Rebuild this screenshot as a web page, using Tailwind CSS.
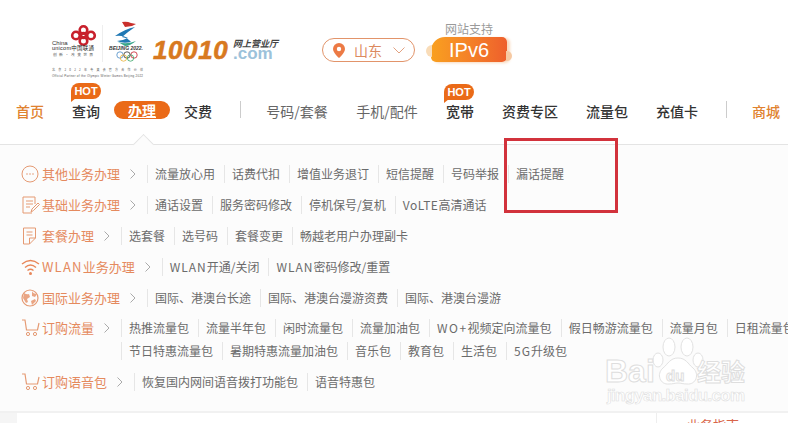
<!DOCTYPE html>
<html lang="zh-CN">
<head>
    <meta charset="UTF-8">
    <title>中国联通网上营业厅</title>
    <script src="https://cdn.jsdelivr.net/npm/@tailwindcss/browser@4"></script>
</head>
<body class="relative w-[788px] h-[423px] overflow-hidden bg-white font-['Noto_Sans_CJK_SC','Noto_Sans',sans-serif] text-[12px] whitespace-nowrap text-[#6b6b6b]">

    <!-- 顶部 logo 区 -->
    <header class="flex h-[84px]">
        <svg class="ml-[46px] mt-[20px] shrink-0" width="104" height="60" viewBox="46 20 104 60">
            <!-- 联通中国结 -->
            <g fill="none" stroke="#c8202c" stroke-width="2.600">
                <circle cx="83.500" cy="30" r="3.800"/>
                <circle cx="76" cy="35.500" r="3.800"/>
                <circle cx="91" cy="35.500" r="3.800"/>
                <circle cx="83.500" cy="41" r="3.800"/>
                <circle cx="83.500" cy="35.500" r="2.400"/>
            </g>
            <text x="52" y="45" font-size="6" fill="#333" font-family="Liberation Sans">China</text>
            <text x="52" y="50" font-size="5.500" fill="#222" font-family="Liberation Sans,Noto Sans CJK SC" textLength="42">unicom中国联通</text>
            <text x="53" y="56" font-size="3.800" fill="#555" textLength="40">创新·改变世界</text>
            <line x1="102.500" y1="25" x2="102.500" y2="62" stroke="#eee"/>
            <!-- 冬奥会徽 -->
            <path d="M122 22q5-1 9 1l5 1-4 2-7 1z" fill="#c9302c"/>
            <path d="M135 27q-10 2-20 9 8-1 13 2-6 3-11 3 6 3 14 1-3-4-9-5 7-6 13-10z" fill="#1f78b4"/>
            <path d="M118 42q8 3 18-1-6 5-11 5z" fill="#3aa68a"/>
            <text x="109" y="50" font-size="5" font-style="italic" font-weight="700" fill="#333" font-family="Liberation Sans" textLength="34">BEIJING 2022.</text>
            <g fill="none" stroke-width=".8">
                <circle cx="120" cy="55" r="3.200" stroke="#4a8cc7"/>
                <circle cx="127" cy="55" r="3.200" stroke="#333"/>
                <circle cx="134" cy="55" r="3.200" stroke="#c8202c"/>
                <circle cx="123.500" cy="58" r="3.200" stroke="#e8b23a"/>
                <circle cx="130.500" cy="58" r="3.200" stroke="#3aa66a"/>
            </g>
            <text x="52" y="71" font-size="3" fill="#555" textLength="91">北京2022年冬奥会官方合作伙伴</text>
            <text x="52" y="77" font-size="3" fill="#555" textLength="91" font-family="Liberation Sans">Official Partner of the Olympic Winter Games Beijing 2022</text>
        </svg>

        <!-- 10010 字样 -->
        <div class="ml-[3px] mt-[35px] w-[79px] shrink-0 font-['Liberation_Sans'] text-[26px] leading-[30px] font-bold italic text-[#d8791f] tracking-[0.6px] [-webkit-text-stroke:0.6px_#d8791f]">10010</div>
        <div class="ml-[1px] mt-[38px] flex w-[45px] shrink-0 flex-col">
            <span class="h-[12px] text-[9px] leading-[12px] font-bold italic text-[#444]">网上营业厅</span>
            <span class="font-['Liberation_Sans'] text-[17px] leading-[8px] font-bold text-[#9cc2da]">.com</span>
        </div>

        <!-- 省份选择 -->
        <div class="ml-[44px] mt-[38px] flex h-[24px] w-[93px] shrink-0 items-center rounded-full border border-[#e2946a] text-[14px] text-[#dc8a60]">
            <svg class="ml-[10px]" width="12" height="15" viewBox="0 0 12 15"><path d="M6 0a6 6 0 0 1 6 6c0 4-6 9-6 9s-6-5-6-9a6 6 0 0 1 6-6z" fill="#ec7a45"/><circle cx="6" cy="6" r="2.200" fill="#fff"/></svg>
            <span class="ml-[9px] leading-[20px]">山东</span>
            <svg class="ml-[11px]" width="12" height="7" viewBox="0 0 12 7"><path d="M.5 .5 6 6l5.500-5.500" fill="none" stroke="#e2a180"/></svg>
        </div>

        <!-- IPv6 -->
        <div class="ml-[16px] mt-[21px] flex w-[76px] shrink-0 flex-col items-center">
            <span class="text-[12px] leading-[15px] text-[#9a9a9a]">网站支持</span>
            <div class="relative mt-[1px] flex h-[25px] w-[76px] items-center justify-center rounded-[5px] rounded-tl-[14px] bg-gradient-to-r from-[#f9a01f] to-[#ee5f2c] font-['Liberation_Sans'] text-[20px] text-white shadow-[3px_1px_3px_#f8d9bd]">
                <i class="absolute left-[-5px] top-[8px] h-[12px] w-[6px] rounded-l-full bg-[#f9dcb8]"></i>
                <i class="absolute right-[-5px] top-[14px] h-[10px] w-[6px] rounded-r-full bg-[#f6c9a2]"></i>
                IPv6
            </div>
        </div>
    </header>

    <!-- 主导航 -->
    <nav class="flex h-[60px] pl-[2px] pt-[17px] text-[14px] leading-[20px] font-medium text-[#333]">
        <a class="w-[56px] shrink-0 text-center text-[#e0822f]">首页</a>
        <a class="relative w-[56px] shrink-0 text-center">查询
            <span class="absolute left-[13px] top-[-18px] h-[16px] w-[30px] rounded-[8px] rounded-bl-none bg-[#ea6a18] font-['Liberation_Sans'] text-[11px] leading-[16px] font-bold text-white">HOT</span>
            <svg class="absolute left-[13px] top-[-3px]" width="5" height="4" viewBox="0 0 5 4"><path d="M0 0h5L0 4z" fill="#ea6a18"/></svg>
        </a>
        <a class="h-[18px] w-[56px] shrink-0 rounded-full bg-[#ea6a18] text-center leading-[18px] font-bold text-white underline">办理</a>
        <a class="w-[56px] shrink-0 text-center">交费</a>
        <i class="ml-[14px] mr-[11px] h-[17px] w-px shrink-0 bg-[#ccc]"></i>
        <a class="w-[90px] shrink-0 text-center font-normal text-[#666]">号码/套餐</a>
        <a class="w-[90px] shrink-0 text-center font-normal text-[#666]">手机/配件</a>
        <a class="relative w-[56px] shrink-0 text-center">宽带
            <span class="absolute left-[12px] top-[-17px] h-[16px] w-[30px] rounded-[8px] rounded-bl-none bg-[#ea6a18] font-['Liberation_Sans'] text-[11px] leading-[16px] font-bold text-white">HOT</span>
            <svg class="absolute left-[12px] top-[-2px]" width="5" height="4" viewBox="0 0 5 4"><path d="M0 0h5L0 4z" fill="#ea6a18"/></svg>
        </a>
        <a class="w-[84px] shrink-0 text-center">资费专区</a>
        <a class="w-[70px] shrink-0 text-center">流量包</a>
        <a class="w-[70px] shrink-0 text-center">充值卡</a>
        <i class="ml-[14px] mr-[11px] h-[17px] w-px shrink-0 bg-[#ccc]"></i>
        <a class="w-[56px] shrink-0 text-center text-[#e0822f]">商城</a>
    </nav>

    <!-- 下拉面板 -->
    <section class="relative h-[267px] border-t border-[#e4e4e4] bg-[#fcfcfc] pt-[13px]">
        <i class="absolute left-[136px] top-[-8px] h-[15px] w-[15px] rotate-45 border-l border-t border-[#e4e4e4] bg-[#fcfcfc]"></i>

        <div class="flex h-[31px] items-center pl-[21px]">
            <svg class="w-[21px] shrink-0" width="21" height="18" viewBox="0 0 21 18"><circle cx="9" cy="9" r="8" fill="none" stroke="#e59a73"/><path d="M5.500 9h1M8.500 9h1M11.500 9h1" stroke="#e08a60" stroke-width="1.400"/></svg>
            <span class="text-[13px] text-[#e58a5e]">其他业务办理</span>
            <svg class="ml-[10px] mr-[11px]" width="6" height="10" viewBox="0 0 6 10"><path d="M.5 .5 5 5 .5 9.500" fill="none" stroke="#aaa"/></svg>
            <a class="border-l border-[#e6e6e6] pl-[7px] pr-[9px]">流量放心用</a>
            <a class="border-l border-[#e6e6e6] pl-[7px] pr-[9px]">话费代扣</a>
            <a class="border-l border-[#e6e6e6] pl-[7px] pr-[9px]">增值业务退订</a>
            <a class="border-l border-[#e6e6e6] pl-[7px] pr-[9px]">短信提醒</a>
            <a class="border-l border-[#e6e6e6] pl-[7px] pr-[9px]">号码举报</a>
            <a class="border-l border-[#e6e6e6] pl-[7px] pr-[9px]">漏话提醒</a>
        </div>

        <div class="flex h-[31px] items-center pl-[21px]">
            <svg class="w-[21px] shrink-0" width="21" height="18" viewBox="0 0 21 18"><path d="M11 17H2V1h12v7M5 5h7M5 8h7M5 11h4" fill="none" stroke="#e59a73"/><path d="m10 16 1-3 6-6 1.500 1.500-6 6z" fill="none" stroke="#e59a73"/></svg>
            <span class="text-[13px] text-[#e58a5e]">基础业务办理</span>
            <svg class="ml-[10px] mr-[11px]" width="6" height="10" viewBox="0 0 6 10"><path d="M.5 .5 5 5 .5 9.500" fill="none" stroke="#aaa"/></svg>
            <a class="border-l border-[#e6e6e6] pl-[7px] pr-[9px]">通话设置</a>
            <a class="border-l border-[#e6e6e6] pl-[7px] pr-[9px]">服务密码修改</a>
            <a class="border-l border-[#e6e6e6] pl-[7px] pr-[9px]">停机保号/复机</a>
            <a class="border-l border-[#e6e6e6] pl-[7px] pr-[9px]"><span class="tracking-[0.5px]">VoLTE</span>高清通话</a>
        </div>

        <div class="flex h-[31px] items-center pl-[21px]">
            <svg class="w-[21px] shrink-0" width="21" height="18" viewBox="0 0 21 18"><path d="M2.500 1h12v10l-6 6h-6zM14.500 11h-6v6M5.500 5h6M5.500 8h6" fill="none" stroke="#e59a73"/></svg>
            <span class="text-[13px] text-[#e58a5e]">套餐办理</span>
            <svg class="ml-[10px] mr-[11px]" width="6" height="10" viewBox="0 0 6 10"><path d="M.5 .5 5 5 .5 9.500" fill="none" stroke="#aaa"/></svg>
            <a class="border-l border-[#e6e6e6] pl-[7px] pr-[9px]">选套餐</a>
            <a class="border-l border-[#e6e6e6] pl-[7px] pr-[9px]">选号码</a>
            <a class="border-l border-[#e6e6e6] pl-[7px] pr-[9px]">套餐变更</a>
            <a class="border-l border-[#e6e6e6] pl-[7px] pr-[9px]">畅越老用户办理副卡</a>
        </div>

        <div class="flex h-[31px] items-center pl-[21px]">
            <svg class="w-[21px] shrink-0" width="21" height="18" viewBox="0 0 21 18"><path d="M1 6q8.500-7 17 0M4 9.500q5.500-5 11 0M6.500 12.500q3-2.500 6 0" fill="none" stroke="#e8875a" stroke-width="1.400"/><circle cx="9.500" cy="15.500" r="1.500" fill="#e8875a"/></svg>
            <span class="text-[13px] text-[#e58a5e]"><span class="tracking-[1.200px]">WLAN</span>业务办理</span>
            <svg class="ml-[10px] mr-[11px]" width="6" height="10" viewBox="0 0 6 10"><path d="M.5 .5 5 5 .5 9.500" fill="none" stroke="#aaa"/></svg>
            <a class="border-l border-[#e6e6e6] pl-[7px] pr-[9px]"><span class="tracking-[1px]">WLAN</span>开通/关闭</a>
            <a class="border-l border-[#e6e6e6] pl-[7px] pr-[9px]"><span class="tracking-[1px]">WLAN</span>密码修改/重置</a>
        </div>

        <div class="flex h-[31px] items-center pl-[21px]">
            <svg class="w-[21px] shrink-0" width="21" height="18" viewBox="0 0 21 18"><circle cx="9" cy="9" r="8" fill="none" stroke="#e59a73" stroke-width="1.200"/><path d="M3 4q3 2 5 1l1 3-3 2 1 3-2 1-3-5M11 2q1 3 5 3l-2 3-3-1zM10 12l4-2 1 2-4 4z" fill="#eaa583"/></svg>
            <span class="text-[13px] text-[#e58a5e]">国际业务办理</span>
            <svg class="ml-[10px] mr-[11px]" width="6" height="10" viewBox="0 0 6 10"><path d="M.5 .5 5 5 .5 9.500" fill="none" stroke="#aaa"/></svg>
            <a class="border-l border-[#e6e6e6] pl-[7px] pr-[9px]">国际、港澳台长途</a>
            <a class="border-l border-[#e6e6e6] pl-[7px] pr-[9px]">国际、港澳台漫游资费</a>
            <a class="border-l border-[#e6e6e6] pl-[7px] pr-[9px]">国际、港澳台漫游</a>
        </div>

        <div class="mt-[3px] flex pl-[21px]">
            <svg class="mt-[3px] w-[21px] shrink-0" width="21" height="18" viewBox="0 0 21 18"><path d="M1 1h3l1.500 10h11L18 4" fill="none" stroke="#e59a73" stroke-width="1.200"/><circle cx="7" cy="15" r="1.600" fill="none" stroke="#e59a73"/><circle cx="14" cy="15" r="1.600" fill="none" stroke="#e59a73"/></svg>
            <span class="h-[23px] shrink-0 text-[13px] leading-[23px] text-[#e58a5e]">订购流量</span>
            <svg class="ml-[10px] mr-[11px] mt-[7px] shrink-0" width="6" height="10" viewBox="0 0 6 10"><path d="M.5 .5 5 5 .5 9.500" fill="none" stroke="#aaa"/></svg>
            <div class="flex shrink-0 flex-col">
                <div class="flex h-[23px] items-center">
                    <a class="border-l border-[#e6e6e6] pl-[7px] pr-[9px]">热推流量包</a>
                    <a class="border-l border-[#e6e6e6] pl-[7px] pr-[9px]">流量半年包</a>
                    <a class="border-l border-[#e6e6e6] pl-[7px] pr-[9px]">闲时流量包</a>
                    <a class="border-l border-[#e6e6e6] pl-[7px] pr-[9px]">流量加油包</a>
                    <a class="border-l border-[#e6e6e6] pl-[7px] pr-[9px]"><span class="tracking-[1.500px]">WO+</span>视频定向流量包</a>
                    <a class="border-l border-[#e6e6e6] pl-[7px] pr-[9px]">假日畅游流量包</a>
                    <a class="border-l border-[#e6e6e6] pl-[7px] pr-[9px]">流量月包</a>
                    <a class="border-l border-[#e6e6e6] pl-[7px] pr-[9px]">日租流量包</a>
                </div>
                <div class="flex h-[23px] items-center">
                    <a class="border-l border-[#e6e6e6] pl-[7px] pr-[9px]">节日特惠流量包</a>
                    <a class="border-l border-[#e6e6e6] pl-[7px] pr-[9px]">暑期特惠流量加油包</a>
                    <a class="border-l border-[#e6e6e6] pl-[7px] pr-[9px]">音乐包</a>
                    <a class="border-l border-[#e6e6e6] pl-[7px] pr-[9px]">教育包</a>
                    <a class="border-l border-[#e6e6e6] pl-[7px] pr-[9px]">生活包</a>
                    <a class="border-l border-[#e6e6e6] pl-[7px] pr-[9px]"><span class="tracking-[1px]">5G</span>升级包</a>
                </div>
            </div>
        </div>

        <div class="mt-[4px] flex h-[31px] items-center pl-[21px]">
            <svg class="w-[21px] shrink-0" width="21" height="18" viewBox="0 0 21 18"><path d="M1 1h3l1.500 10h11L18 4" fill="none" stroke="#e59a73" stroke-width="1.200"/><circle cx="7" cy="15" r="1.600" fill="none" stroke="#e59a73"/><circle cx="14" cy="15" r="1.600" fill="none" stroke="#e59a73"/></svg>
            <span class="text-[13px] text-[#e58a5e]">订购语音包</span>
            <svg class="ml-[10px] mr-[11px]" width="6" height="10" viewBox="0 0 6 10"><path d="M.5 .5 5 5 .5 9.500" fill="none" stroke="#aaa"/></svg>
            <a class="border-l border-[#e6e6e6] pl-[7px] pr-[9px]">恢复国内网间语音拨打功能包</a>
            <a class="border-l border-[#e6e6e6] pl-[7px] pr-[9px]">语音特惠包</a>
        </div>
    </section>

    <!-- 底部内容区（被截断） -->
    <div class="flex h-[12px] border-t-2 border-[#f1f1f1] bg-white">
        <div class="w-[17px] bg-[#f5f5f5]"></div>
        <div class="w-[640px] border-r border-[#eee]"></div>
        <div class="ml-[30px] text-[13px] leading-[24px] text-[#d9654a]">业务指南</div>
    </div>

    <!-- 红色标注框 -->
    <div class="absolute left-[504px] top-[138px] h-[75px] w-[114px] border-[3px] border-[#d2323c]"></div>

    <!-- 百度经验水印 -->
    <svg class="absolute left-[600px] top-[334px]" width="150" height="74" viewBox="0 0 150 74">
        <g fill="#fff" stroke="#e2e2e2">
            <ellipse cx="69" cy="13" rx="6" ry="9"/>
            <ellipse cx="87" cy="13" rx="6" ry="9"/>
            <ellipse cx="58" cy="26" rx="5" ry="7"/>
            <ellipse cx="98" cy="26" rx="5" ry="7"/>
            <path d="M78 24c8 0 10 6 15 10 7 6 3 17-6 16-4 0-6-1-9-1s-5 1-9 1c-9 1-13-10-6-16 5-4 7-10 15-10z"/>
        </g>
        <g font-family="Liberation Sans,Noto Sans CJK SC" fill="#fff" stroke="#dedede" font-weight="700">
            <text x="5" y="48" font-size="32">Bai</text>
            <text x="66" y="47" font-size="15">du</text>
            <text x="97" y="47" font-size="24">经验</text>
            <text x="7" y="67" font-size="17" stroke-width=".6" textLength="138">jingyan.baidu.com</text>
        </g>
    </svg>
</body>
</html>
